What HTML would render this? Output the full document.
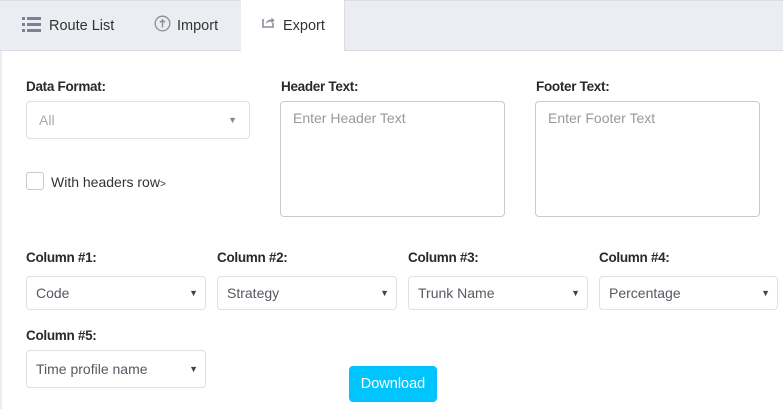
<!DOCTYPE html>
<html><head><meta charset="utf-8"><style>
*{box-sizing:border-box;margin:0;padding:0}
body{width:783px;height:409px;overflow:hidden;background:#fff;font-family:"Liberation Sans",sans-serif;color:#212529;position:relative}
.bar{position:absolute;left:0;top:0;width:783px;height:51px;background:#ebedf2;border-top:1px solid #dcdde2;border-bottom:1px solid #dcdde2}
.lb{position:absolute;left:0;top:51px;width:2px;height:358px;background:#ebedf2}
.tab{position:absolute;top:1px;height:50px;line-height:50px;font-size:14.5px;color:#333}
.exp{position:absolute;left:241px;top:0;width:104px;height:51px;background:#fff;border-right:1px solid #dcdde2}
.abs{position:absolute}
.lbl{position:absolute;font-size:13.5px;font-weight:bold;color:#2a2a2a;letter-spacing:-0.3px}
.box{position:absolute;border:1px solid #dfe0e3;border-radius:4px;background:#fff;font-size:14px;color:#575962}
.box span{position:absolute;left:9px;top:50%;transform:translateY(-50%)}
.box i{position:absolute;right:7px;top:50%;transform:translateY(-50%);font-style:normal;font-size:9px;color:#444}
.ta{position:absolute;border:1px solid #c9cacd;border-radius:4px;font-size:14px;color:#999;padding:8px 12px}
</style></head><body>
<div class="bar"></div>
<div class="exp"></div>
<div class="lb"></div>
<svg class="abs" style="left:22px;top:17px" width="19" height="16"><g fill="#7c8292"><rect x="0" y="0" width="3" height="3"/><rect x="5" y="0" width="14" height="3"/><rect x="0" y="6" width="3" height="3"/><rect x="5" y="6" width="14" height="3"/><rect x="0" y="12" width="3" height="3"/><rect x="5" y="12" width="14" height="3"/></g></svg>
<div class="tab" style="left:49px">Route List</div>
<svg class="abs" style="left:154px;top:15px" width="17" height="17"><circle cx="8.5" cy="8.5" r="7.3" fill="none" stroke="#8a8f9c" stroke-width="1.3"/><path d="M8.5 12.5V5M6 7.5l2.5-2.5 2.5 2.5" fill="none" stroke="#8a8f9c" stroke-width="1.4"/></svg>
<div class="tab" style="left:177px">Import</div>
<svg class="abs" style="left:262px;top:16px" width="13" height="12"><path d="M1 3v8h10V7" fill="none" stroke="#8a8f9c" stroke-width="1.6"/><path d="M3.5 8c1-3 3-4.5 6-4.5V1.5l3 3-3 3V5.5c-2 0-4 .5-6 2.5z" fill="#8a8f9c"/></svg>
<div class="tab" style="left:283px">Export</div>

<div class="lbl" style="left:26px;top:79px">Data Format:</div>
<div class="box" style="left:26px;top:101px;width:224px;height:38px;color:#aaa"><span style="left:12px">All</span><i style="right:12px;color:#888">▼</i></div>
<div class="abs" style="left:26px;top:172px;width:18px;height:18px;border:1px solid #c9cacd;border-radius:3px"></div>
<div class="abs" style="left:51px;top:174px;font-size:14px;color:#333">With headers row<span style="font-size:10px">&gt;</span></div>

<div class="lbl" style="left:281px;top:79px">Header Text:</div>
<div class="ta" style="left:280px;top:101px;width:225px;height:116px">Enter Header Text</div>
<div class="lbl" style="left:536px;top:79px">Footer Text:</div>
<div class="ta" style="left:535px;top:101px;width:225px;height:116px">Enter Footer Text</div>

<div class="lbl" style="left:26px;top:250px">Column #1:</div>
<div class="box" style="left:26px;top:276px;width:180px;height:34px"><span>Code</span><i>▼</i></div>
<div class="lbl" style="left:217px;top:250px">Column #2:</div>
<div class="box" style="left:217px;top:276px;width:180px;height:34px"><span>Strategy</span><i>▼</i></div>
<div class="lbl" style="left:408px;top:250px">Column #3:</div>
<div class="box" style="left:408px;top:276px;width:180px;height:34px"><span>Trunk Name</span><i>▼</i></div>
<div class="lbl" style="left:599px;top:250px">Column #4:</div>
<div class="box" style="left:599px;top:276px;width:179px;height:34px"><span>Percentage</span><i>▼</i></div>
<div class="lbl" style="left:26px;top:328px">Column #5:</div>
<div class="box" style="left:26px;top:350px;width:180px;height:38px"><span>Time profile name</span><i>▼</i></div>

<div class="abs" style="left:349px;top:366px;width:88px;height:36px;background:#00c5fc;border-radius:4px;color:#fff;font-size:14.5px;text-align:center;line-height:36px">Download</div>
</body></html>
